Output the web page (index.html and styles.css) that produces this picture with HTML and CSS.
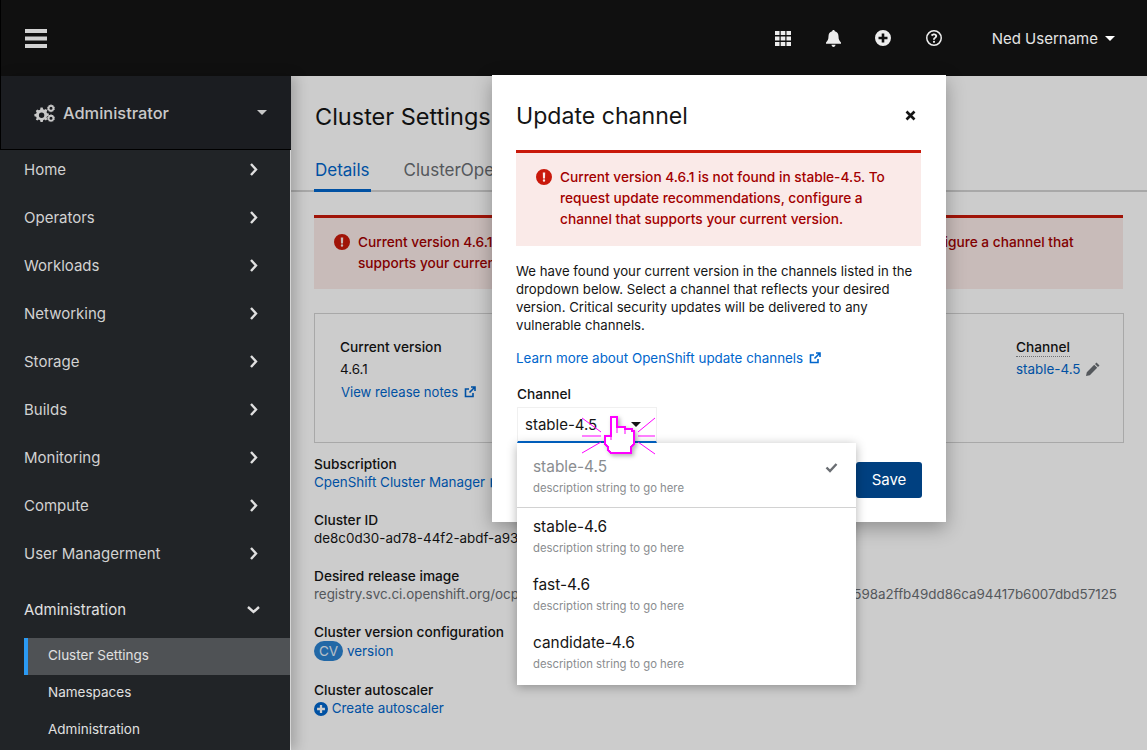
FILE: index.html
```html
<!DOCTYPE html>
<html lang="en">
<head>
  <meta charset="UTF-8">
  <title>Cluster Settings</title>
  <link rel="stylesheet" href="styles.css">
</head>
<body>

<div class="page">
  <!-- Top bar -->
  <header class="masthead">
    <svg class="burger" width="23" height="19" viewBox="0 0 23 19"><path d="M0 0h22v4H0zM0 7.500h22v4H0zM0 15h22v4H0z"/></svg>
    <div class="tools">
      <svg class="tool" width="16" height="15" viewBox="0 0 16 15"><path d="M0 0h4.500v4H0zM5.700 0h4.600v4H5.700zM11.500 0H16v4h-4.500zM0 5.500h4.500v4H0zM5.700 5.500h4.600v4H5.700zM11.500 5.500H16v4h-4.500zM0 11h4.500v4H0zM5.700 11h4.600v4H5.700zM11.500 11H16v4h-4.500z"/></svg>
      <svg class="tool" width="15" height="17" viewBox="0 0 15 17"><path d="M7.500 0c.8 0 1.300.6 1.300 1.300 2.500.5 3.700 2.600 3.700 5 0 3.400 1 4.700 2.500 6.200v1.200H0v-1.200c1.500-1.500 2.500-2.800 2.500-6.200 0-2.400 1.200-4.500 3.700-5C6.200.6 6.700 0 7.500 0zM5.500 14.700h4c0 1.200-.9 2.200-2 2.200s-2-1-2-2.200z"/></svg>
      <svg class="tool" width="16" height="16" viewBox="0 0 16 16"><path fill-rule="evenodd" d="M8 0a8 8 0 1 1 0 16A8 8 0 0 1 8 0zM6.700 3.500v3.200H3.500v2.600h3.200v3.200h2.600V9.300h3.200V6.700H9.300V3.500z"/></svg>
      <svg class="tool" width="16" height="16" viewBox="0 0 16 16"><path fill-rule="evenodd" d="M8 0a8 8 0 1 1 0 16A8 8 0 0 1 8 0zm0 1.500a6.500 6.500 0 1 0 0 13 6.500 6.500 0 0 0 0-13zM8.200 3.500c1.700 0 3 1 3 2.600 0 2.200-2.300 2.100-2.300 3.500v.2H7v-.4c0-2 2.200-2.100 2.200-3.200 0-.6-.5-1-1.200-1-.7 0-1.200.4-1.700 1L4.900 5C5.700 4 6.800 3.500 8.200 3.500zM8 10.700a1.100 1.100 0 1 1 0 2.200 1.100 1.100 0 0 1 0-2.200z"/></svg>
      <span class="user">Ned Username</span>
      <span class="caret caret-white"></span>
    </div>
  </header>

  <!-- Left column -->
  <aside class="sidebar">
    <div class="switcher">
      <svg class="cogs" width="20" height="17" viewBox="0 0 20 17"><path fill-rule="evenodd" d="M5.500 3.500h2.200l.4 1.700 1.300.6 1.500-.9 1.500 1.500-.9 1.500.6 1.300 1.700.4v2.200l-1.700.4-.6 1.300.9 1.500-1.500 1.500-1.500-.9-1.300.6-.4 1.700H5.500l-.4-1.700-1.300-.6-1.500.9L.8 15.500l.9-1.500-.6-1.300L-.6 12.300V10.100l1.700-.4.6-1.300-.9-1.500 1.500-1.500 1.500.9 1.300-.6zm1.100 5a2.700 2.700 0 1 0 0 5.400 2.700 2.700 0 0 0 0-5.400z"/><path fill-rule="evenodd" d="M16 0l.8 1.200 1.400-.2.400 1.400 1.300.6-.5 1.300.5 1.300-1.300.6-.4 1.400-1.400-.2L16 8.500l-.8-1.100-1.400.2-.4-1.400-1.300-.6.500-1.300-.5-1.300 1.300-.6.400-1.400 1.400.2zm0 2.700a1.500 1.500 0 1 0 0 3 1.500 1.500 0 0 0 0-3zM16 10l.8 1.100 1.400-.2.400 1.400 1.300.6-.5 1.300.5 1.300-1.300.6-.4 1.400-1.400-.2-.8 1-.8-1-1.400.2-.4-1.400-1.300-.6.500-1.300-.5-1.300 1.300-.6.400-1.400 1.400.2zm0 2.700a1.500 1.500 0 1 0 0 3 1.500 1.500 0 0 0 0-3z"/></svg>
      <span class="switcher-label">Administrator</span>
      <span class="caret caret-grey"></span>
    </div>
    <nav class="nav">
      <a class="nav-item">Home <svg class="chev" width="9" height="13" viewBox="0 0 9 13"><path d="M2 1l5 5.500L2 12" /></svg></a>
      <a class="nav-item">Operators <svg class="chev" width="9" height="13" viewBox="0 0 9 13"><path d="M2 1l5 5.500L2 12" /></svg></a>
      <a class="nav-item">Workloads <svg class="chev" width="9" height="13" viewBox="0 0 9 13"><path d="M2 1l5 5.500L2 12" /></svg></a>
      <a class="nav-item">Networking <svg class="chev" width="9" height="13" viewBox="0 0 9 13"><path d="M2 1l5 5.500L2 12" /></svg></a>
      <a class="nav-item">Storage <svg class="chev" width="9" height="13" viewBox="0 0 9 13"><path d="M2 1l5 5.500L2 12" /></svg></a>
      <a class="nav-item">Builds <svg class="chev" width="9" height="13" viewBox="0 0 9 13"><path d="M2 1l5 5.500L2 12" /></svg></a>
      <a class="nav-item">Monitoring <svg class="chev" width="9" height="13" viewBox="0 0 9 13"><path d="M2 1l5 5.500L2 12" /></svg></a>
      <a class="nav-item">Compute <svg class="chev" width="9" height="13" viewBox="0 0 9 13"><path d="M2 1l5 5.500L2 12" /></svg></a>
      <a class="nav-item">User Managerment <svg class="chev" width="9" height="13" viewBox="0 0 9 13"><path d="M2 1l5 5.500L2 12" /></svg></a>
      <a class="nav-item nav-open">Administration <svg class="chev" width="13" height="9" viewBox="0 0 13 9"><path d="M1 2l5.500 5L12 2" /></svg></a>
      <a class="sub-item sub-active">Cluster Settings</a>
      <a class="sub-item">Namespaces</a>
      <a class="sub-item">Administration</a>
    </nav>
  </aside>

  <!-- Page behind the dialog -->
  <main class="content">
    <h1 class="page-title">Cluster Settings</h1>
    <div class="tabs">
      <span class="tab tab-active">Details</span>
      <span class="tab">ClusterOperators</span>
    </div>
    <div class="alert alert-page">
      <svg class="alert-icon" width="16" height="16" viewBox="0 0 16 16"><path fill-rule="evenodd" d="M8 0a8 8 0 1 1 0 16A8 8 0 0 1 8 0zM6.800 3.500l.2 6h2l.2-6zM8 10.300a1.200 1.200 0 1 0 0 2.400 1.200 1.200 0 0 0 0-2.400z"/></svg>
      <p class="alert-text">Current version 4.6.1 is not found in stable-4.5. To request update recommendations, configure a channel that supports your current version.</p>
    </div>
    <section class="card">
      <div>
        <div class="label">Current version</div>
        <div class="value">4.6.1</div>
        <a class="link link-notes">View release notes
          <svg class="ext" width="12" height="12" viewBox="0 0 12 12"><path d="M9 7v3.500H1.500V3H5M7 1h4v4M11 1L5.500 6.500"/></svg>
        </a>
      </div>
      <div class="channel-col">
        <div class="label label-dotted">Channel</div>
        <div class="value"><a class="link">stable-4.5</a>
          <svg class="pencil" width="14" height="14" viewBox="0 0 14 14"><path d="M10.500.5l3 3-1.500 1.500-3-3zM8.200 2.800l3 3-7.400 7.400L0 14l.8-3.800z"/></svg>
        </div>
      </div>
    </section>
    <dl class="details">
      <dt class="label">Subscription</dt>
      <dd class="link">CpenShift Cluster Manager
        <svg class="ext ext-tight" width="12" height="12" viewBox="0 0 12 12"><path d="M9 7v3.500H1.500V3H5M7 1h4v4M11 1L5.500 6.500"/></svg>
      </dd>
      <dt class="label">Cluster ID</dt>
      <dd class="value">de8c0d30-ad78-44f2-abdf-a93</dd>
      <dt class="label">Desired release image</dt>
      <dd class="value value-muted image-row"><span>registry.svc.ci.openshift.org/ocp/</span><span>598a2ffb49dd86ca94417b6007dbd57125</span></dd>
      <dt class="label">Cluster version configuration</dt>
      <dd><span class="badge">CV</span> <a class="link">version</a></dd>
      <dt class="label">Cluster autoscaler</dt>
      <dd class="link">
        <svg class="plus" width="14" height="14" viewBox="0 0 16 16"><path fill-rule="evenodd" d="M8 0a8 8 0 1 1 0 16A8 8 0 0 1 8 0zM6.700 3.500v3.200H3.500v2.600h3.200v3.200h2.600V9.300h3.200V6.700H9.300V3.500z"/></svg>
        Create autoscaler
      </dd>
    </dl>
  </main>
</div>

<div class="backdrop"></div>

<!-- Dialog -->
<div class="modal">
  <div class="modal-head">
    <h2 class="modal-title">Update channel</h2>
    <svg class="close" width="11" height="11" viewBox="0 0 11 11"><path d="M1.500 1.500l8 8M9.500 1.500l-8 8"/></svg>
  </div>
  <div class="alert alert-modal">
    <svg class="alert-icon" width="16" height="16" viewBox="0 0 16 16"><path fill-rule="evenodd" d="M8 0a8 8 0 1 1 0 16A8 8 0 0 1 8 0zM6.800 3.500l.2 6h2l.2-6zM8 10.300a1.200 1.200 0 1 0 0 2.400 1.200 1.200 0 0 0 0-2.400z"/></svg>
    <p class="alert-text">Current version 4.6.1 is not found in stable-4.5. To request update recommendations, configure a channel that supports your current version.</p>
  </div>
  <p class="modal-copy">We have found your current version in the channels listed in the dropdown below. Select a channel that reflects your desired version. Critical security updates will be delivered to any vulnerable channels.</p>
  <a class="link modal-link">Learn more about OpenShift update channels
    <svg class="ext" width="12" height="12" viewBox="0 0 12 12"><path d="M9 7v3.500H1.500V3H5M7 1h4v4M11 1L5.500 6.500"/></svg>
  </a>
  <div class="label modal-label">Channel</div>
  <div class="select">
    <span>stable-4.5</span>
    <span class="caret caret-black"></span>
  </div>
  <div class="modal-foot">
    <button class="save">Save</button>
  </div>

  <ul class="menu">
    <li class="menu-item menu-selected">
      <div class="menu-name">stable-4.5</div>
      <div class="menu-desc">description string to go here</div>
      <svg class="check" width="13" height="11" viewBox="0 0 13 11"><path d="M1.500 5.500l3.500 3.500 6.500-7"/></svg>
    </li>
    <li class="menu-item">
      <div class="menu-name">stable-4.6</div>
      <div class="menu-desc">description string to go here</div>
    </li>
    <li class="menu-item">
      <div class="menu-name">fast-4.6</div>
      <div class="menu-desc">description string to go here</div>
    </li>
    <li class="menu-item">
      <div class="menu-name">candidate-4.6</div>
      <div class="menu-desc">description string to go here</div>
    </li>
  </ul>
</div>

<!-- Pointer marker drawn on the mockup -->
<svg class="pointer" width="76" height="42" viewBox="0 0 76 42">
  <g class="rays">
    <path d="M2 22h19M58 22h17M2 4l19 14M75 4L58 18M2 39l19-11M75 40L58 28"/>
  </g>
  <path class="hand" d="M31 18V3h6v10h8v2h7v2h2v13l-3 3v6H31l-3-3v-3l-3-3v-8h6z"/>
  <path class="hand-lines" d="M37 13v6M45 15v5M31 22v4"/>
</svg>

</body>
</html>
```

FILE: styles.css
```css
/* Base */
body {
  margin: 0;
  font-family: "Inter", "Noto Sans", sans-serif;
  font-size: 13.4px;
  color: #151515;
  background: #fff;
  overflow: hidden;
}

.page {
  height: 100vh;
  display: grid;
  grid-template-columns: 291px 1fr;
  grid-template-rows: 76px 1fr;
}

.backdrop {
  position: absolute;
  top: 76px;
  left: 291px;
  right: 0;
  bottom: 0;
  background: rgba(0, 0, 0, 0.2);
}

/* Masthead */
.masthead {
  grid-column: 1 / 3;
  background: #101010;
  border-left: 1px solid #000;
  display: flex;
  align-items: center;
  justify-content: space-between;
  padding: 0 32px 0 24px;
}

.burger {
  fill: #d2d2d2;
}

.tools {
  display: flex;
  align-items: center;
  color: #e4e4e4;
}

.tool {
  fill: #ededed;
  margin-right: 34.500px;
}

.tool:nth-child(4) {
  margin-right: 50px;
}

.user {
  font-size: 15px;
  margin-right: 7px;
}

.caret {
  display: inline-block;
  width: 0;
  height: 0;
  border-left: 5px solid transparent;
  border-right: 5px solid transparent;
  border-top: 5px solid #fff;
}

.caret-grey {
  border-top-color: #c8c8c8;
}

.caret-black {
  border-top-color: #151515;
}

/* Sidebar */
.sidebar {
  background: #212427;
  color: #d2d2d2;
  width: 290px;
  position: relative;
  z-index: 0;
  box-shadow: 6px 0 12px rgba(0, 0, 0, 0.2);
}

.switcher {
  width: 291px;
  background: #1b1d21;
  border-left: 1px solid #000;
  border-bottom: 1px solid #000;
  display: flex;
  align-items: center;
  padding: 0 24px 0 34px;
  box-sizing: border-box;
  height: 74px;
  color: #c8c8c8;
}

.cogs {
  fill: #c8c8c8;
  margin-right: 8px;
  overflow: visible;
}

.switcher-label {
  font-size: 16.400px;
  font-weight: 500;
  flex: 1;
}

.nav {
  padding-top: 8px;
  font-size: 15px;
}

.nav-item {
  display: flex;
  align-items: center;
  justify-content: space-between;
  box-sizing: border-box;
  height: 24px;
  margin-bottom: 24px;
  padding: 0 32px 1px 24px;
}

.nav-open {
  margin-top: 32px;
  margin-bottom: 16px;
  padding-right: 30px;
  color: #e0e0e0;
}

.chev {
  fill: none;
  stroke: #e0e0e0;
  stroke-width: 2.400;
}

.sub-item {
  display: flex;
  align-items: center;
  box-sizing: border-box;
  height: 37px;
  margin-left: 24px;
  padding: 0 0 3px 24px;
  font-size: 13.500px;
  color: #e0e0e0;
}

.sub-active {
  background: #4f5255;
  border-left: 4px solid #2b9af3;
  padding-left: 20px;
}

/* Page content */
.content {
  padding: 0 24px 0 23px;
  overflow: hidden;
}

.page-title {
  margin: 26px 0 0 1px;
  font-size: 23.500px;
  font-weight: 400;
  line-height: 30px;
}

.tabs {
  display: flex;
  gap: 32px;
  margin: 22px -24px 0 -23px;
  padding-left: 23px;
  height: 38px;
  box-sizing: border-box;
  border-bottom: 2px solid #d2d2d2;
  font-size: 17px;
  color: #6a6e73;
}

.tab {
  padding: 6px 1px 0;
  height: 38px;
  box-sizing: border-box;
}

.tab-active {
  color: #06c;
  border-bottom: 3px solid #06c;
}

.alert {
  display: flex;
  gap: 8px;
  box-sizing: border-box;
  background: #faeae8;
  border-top: 3px solid #c9190b;
  color: #a30000;
  font-size: 13.700px;
  font-weight: 500;
}

.alert-page {
  margin-top: 23px;
  height: 74px;
  padding: 14px 20px;
}

.alert-icon {
  fill: #c9190b;
  flex: none;
  margin-top: 2px;
}

.alert-text {
  margin: 0;
  line-height: 21px;
}

.card {
  margin: 24px -1px 0 0;
  height: 130px;
  box-sizing: border-box;
  border: 1px solid #d2d2d2;
  padding: 23px 24px 0 25px;
  display: flex;
  justify-content: space-between;
}

.label {
  font-size: 13.700px;
  font-weight: 500;
  line-height: 20px;
}

.value {
  margin: 0;
  line-height: 20px;
  margin-top: 2px;
}

.value-muted {
  color: #6a6e73;
}

.link {
  color: #06c;
}

.link-notes {
  display: block;
  margin: 3px 0 0 1px;
  font-size: 13.100px;
  line-height: 20px;
}

.ext {
  fill: none;
  stroke: #06c;
  stroke-width: 1.600;
  margin-left: 2px;
  vertical-align: -1px;
}

.ext-tight {
  margin-left: 1px;
}

.channel-col {
  width: 83px;
  white-space: nowrap;
}

.label-dotted {
  display: inline-block;
  line-height: 17px;
  margin-top: 2px;
  border-bottom: 1px dotted #8a8d90;
}

.pencil {
  fill: #6a6e73;
  margin-left: 2px;
  vertical-align: -2px;
}

.details {
  margin: 12px 0 0;
  line-height: 20px;
}

.details dt {
  margin-top: 20px;
  line-height: 18px;
}

.details dt:first-child {
  margin-top: 0;
}

.details dd {
  margin: 0;
  line-height: 18px;
  white-space: nowrap;
}

.image-row {
  display: flex;
  justify-content: space-between;
  width: 803px;
}

.badge {
  display: inline-block;
  background: #2b82d0;
  color: #e3f0fa;
  border-radius: 10px;
  padding: 0 5px;
  line-height: 20px;
  font-size: 13.500px;
}

.plus {
  fill: #06c;
  vertical-align: -3px;
}

/* Dialog */
.modal {
  position: absolute;
  top: 75px;
  left: 492px;
  width: 454px;
  height: 447px;
  box-sizing: border-box;
  padding: 24px 25px 24px 24px;
  background: #fff;
  box-shadow: 0 6px 18px rgba(0, 0, 0, 0.3);
}

.modal-head {
  display: flex;
  align-items: center;
  justify-content: space-between;
  height: 33px;
  padding-right: 5px;
}

.modal-title {
  margin: 0;
  font-size: 23.100px;
  font-weight: 400;
}

.close {
  fill: none;
  stroke: #151515;
  stroke-width: 2.600;
}

.alert-modal {
  margin-top: 18px;
  height: 96px;
  padding: 14px 20px;
  background: #faeae8;
}

.modal-copy {
  margin: 16px 0 0;
  font-size: 13.200px;
  line-height: 18px;
}

.modal-link {
  display: block;
  margin-top: 14px;
  line-height: 20px;
}

.modal-label {
  margin-top: 16px;
  margin-left: 1px;
}

.select {
  display: flex;
  align-items: center;
  justify-content: space-between;
  box-sizing: border-box;
  width: 140px;
  height: 36px;
  margin: 3px 0 0 1px;
  padding: 0 15px 0 7px;
  border: 1px solid #f0f0f0;
  border-bottom: 2px solid #06c;
  font-size: 15px;
}

.modal-foot {
  display: flex;
  justify-content: flex-end;
  margin: 19px -1px 0 0;
}

.save {
  width: 66px;
  height: 36px;
  padding-bottom: 2px;
  background: #004080;
  color: #fff;
  border: none;
  border-radius: 3px;
  font: inherit;
  font-size: 15px;
}

.menu {
  position: absolute;
  top: 368px;
  left: 25px;
  width: 339px;
  margin: 0;
  padding: 0 0 3px;
  list-style: none;
  background: #fff;
  box-shadow: 0 2px 10px rgba(0, 0, 0, 0.3);
}

.menu-item {
  position: relative;
  box-sizing: border-box;
  height: 58px;
  padding: 8px 16px 0;
}

.menu-selected {
  height: 65px;
  border-bottom: 1px solid #d2d2d2;
  padding-top: 13px;
}

.menu-name {
  font-size: 15.400px;
  line-height: 22px;
}

.menu-desc {
  font-size: 11.300px;
  line-height: 18px;
  margin-top: 1px;
  color: #8a8d90;
}

.menu-selected .menu-name {
  color: #8a8d90;
}

.check {
  position: absolute;
  top: 19px;
  right: 18px;
  fill: none;
  stroke: #6a6e73;
  stroke-width: 2.400;
}

/* Pointer */
.pointer {
  position: absolute;
  top: 414px;
  left: 580px;
  overflow: visible;
}

.rays {
  fill: none;
  stroke: #f0f;
  stroke-width: 1;
}

.hand {
  fill: #fff;
  stroke: #f0f;
  stroke-width: 2;
  shape-rendering: crispEdges;
  filter: drop-shadow(2px 2px 2px rgba(0, 0, 0, 0.3));
}

.hand-lines {
  fill: none;
  stroke: #f0f;
  stroke-width: 1;
}
```
